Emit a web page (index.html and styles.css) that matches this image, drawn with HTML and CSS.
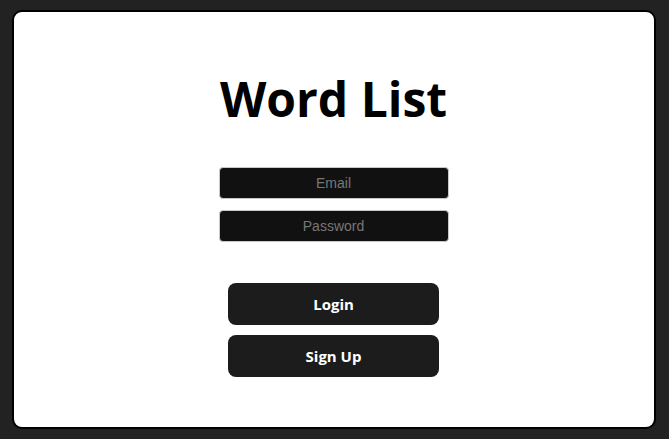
FILE: index.html
```html
<!DOCTYPE html>
<html>
<head>
<meta charset="utf-8">
<link rel="stylesheet" href="styles.css">
</head>
<body>
<main class="card">
  <h1 class="title">Word List</h1>
  <form class="form">
    <div class="fields">
      <input class="field" type="email" placeholder="Email">
      <input class="field" type="password" placeholder="Password">
    </div>
    <div class="actions">
      <button class="btn" type="button">Login</button>
      <button class="btn" type="button">Sign Up</button>
    </div>
  </form>
</main>
</body>
</html>
```
FILE: styles.css
```css
html, body {
  margin: 0;
  height: 100%;
}
body {
  background: #222222;
  padding: 10px 13px 10px 12px;
  box-sizing: border-box;
  display: flex;
}
.card {
  flex: 1;
  background: #ffffff;
  border: 2px solid #000000;
  border-radius: 10px;
  padding-right: 1px;
  display: flex;
  flex-direction: column;
  align-items: center;
  font-family: "Open Sans", "Noto Sans", sans-serif;
}
.title {
  margin: 56px 0 0 0;
  font-size: 48px;
  font-weight: 700;
  line-height: 62px;
  color: #000;
}
.form {
  margin-top: 37px;
  display: flex;
  flex-direction: column;
  align-items: center;
}
.fields {
  display: flex;
  flex-direction: column;
  gap: 11px;
}
.field {
  width: 230px;
  height: 32px;
  box-sizing: border-box;
  background: #111111;
  border: 1px solid #c8c8c8;
  border-radius: 4px;
  color: #ddd;
  font-family: "Liberation Sans", Arial, sans-serif;
  font-size: 14px;
  text-align: center;
  outline: none;
}
.field::placeholder {
  color: #777777;
}
.actions {
  margin-top: 41px;
  display: flex;
  flex-direction: column;
  gap: 10px;
}
.btn {
  width: 211px;
  height: 42px;
  background: #1c1c1c;
  border: none;
  border-radius: 8px;
  color: #ffffff;
  font-family: "Open Sans", "Noto Sans", sans-serif;
  font-weight: 700;
  font-size: 15px;
  cursor: pointer;
}
```
